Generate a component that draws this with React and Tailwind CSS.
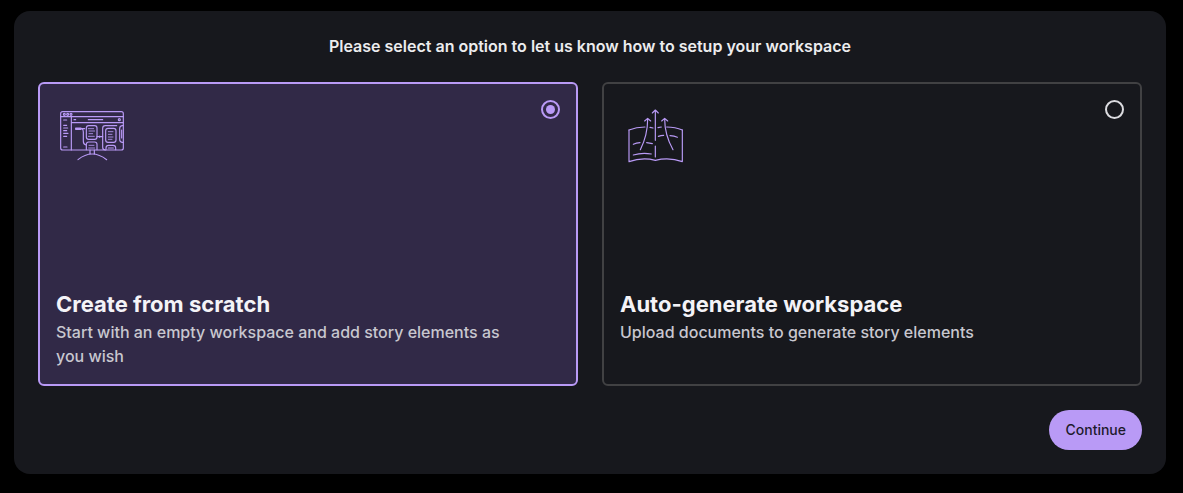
import React, { useState } from 'react';
import clsx from 'clsx';

const CanvasIcon = () => (
  <svg
    className="size-18"
    viewBox="12 -6 216 216"
    fill="none"
    stroke="#b99af6"
    strokeWidth="3.5"
    strokeLinecap="round"
    strokeLinejoin="round"
    aria-hidden="true"
  >
    {/* monitor */}
    <rect x="26" y="29" width="188" height="115" rx="6" />
    <path d="M26 44H214M58 44V144M58 62H214" />
    <circle cx="37" cy="37" r="3" />
    <circle cx="47" cy="37" r="3" />
    <circle cx="57" cy="37" r="3" />
    {/* side menu and toolbar */}
    <path d="M35 54H44M35 70H44M35 78H47M35 86H44M35 94H48M35 103H44M35 135H45M66 53H71M109 53H152" />
    <circle cx="202" cy="53" r="3" />
    {/* nodes */}
    <rect x="71" y="78" width="16" height="4" fill="#b99af6" />
    <path d="M87 80H98M90 80Q94 82 94 90V118Q94 128 102 129M135 104H152M143 102V106" />
    <rect x="103" y="71" width="32" height="41" rx="7" />
    <path d="M109 80H125M111 87H128M111 95H122M109 103H127" strokeWidth="2.5" />
    <path d="M103 143V127Q103 120 110 120H128Q135 120 135 127V143" />
    <path d="M111 130H126M110 138H128" strokeWidth="2.5" />
    <path d="M194 71H160Q152 71 152 79V136Q152 144 160 144" />
    <rect x="161" y="79" width="31" height="42" rx="7" />
    <path d="M169 89H183M169 97H180M169 105H183M169 112H180" strokeWidth="2.5" />
    <path d="M162 143V138Q162 130 170 130H183Q191 130 191 138V143M169 138H184" />
    <path d="M214 71H210Q203 72 203 80V112Q203 120 210 121H214M209 84V108" />
    {/* stand */}
    <path d="M114 144V157M127 144V157M78 173Q120 139 164 173" />
  </svg>
);

const BookIcon = () => (
  <svg
    className="size-18"
    viewBox="12 0 216 216"
    fill="none"
    stroke="#b99af6"
    strokeWidth="3.5"
    strokeLinecap="round"
    strokeLinejoin="round"
    aria-hidden="true"
  >
    {/* book */}
    <path d="M39 90V185Q79 171 118 181Q160 171 199 185V90" />
    <path d="M39 90Q61 81 87 81M102 82L111 84M126 83L136 81M152 81Q178 81 199 90" />
    <path d="M52 133Q61 129 72 128M92 128Q101 129 109 131M52 165Q78 157 106 162M127 109Q135 106 143 106M162 107Q175 108 184 112" />
    {/* arrows */}
    <path d="M118 171V138M118 121V31M109 39L118 30L127 39" />
    <path d="M73 149C88 119 95 95 95 57M86 63L95 55L104 63" />
    <path d="M171 149C154 119 146 95 146 57M137 63L146 55L155 63" />
  </svg>
);

const options = [
  {
    id: 'scratch',
    title: 'Create from scratch',
    description: 'Start with an empty workspace and add story elements as you wish',
    icon: CanvasIcon,
  },
  {
    id: 'auto',
    title: 'Auto-generate workspace',
    description: 'Upload documents to generate story elements',
    icon: BookIcon,
  },
];

const OptionCard = ({ option, selected, onSelect }) => {
  const Icon = option.icon;

  return (
    <label
      className={clsx(
        'flex min-h-76 flex-1 cursor-pointer flex-col justify-between rounded-md border-2 p-4',
        selected ? 'border-[#b99af6] bg-[#312947]' : 'border-[#414143]'
      )}
    >
      <div className="flex items-start justify-between">
        <Icon />
        <input
          type="radio"
          name="workspace-setup"
          value={option.id}
          checked={selected}
          onChange={() => onSelect(option.id)}
          className="size-[19px] cursor-pointer appearance-none rounded-full border-2 border-[#dcdce0] bg-clip-content p-[3px] checked:border-[#b99af6] checked:bg-[#b99af6]"
        />
      </div>
      <div>
        <h2 className="text-[22px] leading-8 font-bold text-[#f4f3f7]">{option.title}</h2>
        <p className="min-h-12 w-11/12 text-base font-medium text-[#c8c7cf]">
          {option.description}
        </p>
      </div>
    </label>
  );
};

const App = () => {
  const [selected, setSelected] = useState('scratch');

  return (
    <div className="min-h-screen bg-black pt-[11px] pr-[17px] pb-[19px] pl-[14px] font-['Inter',sans-serif]">
      <form
        className="rounded-2xl bg-[#17181d] p-6"
        onSubmit={(e) => e.preventDefault()}
      >
        <h1 className="text-center text-base leading-[23px] font-semibold text-[#ececee]">
          Please select an option to let us know how to setup your workspace
        </h1>
        <div className="mt-6 flex gap-6">
          {options.map((option) => (
            <OptionCard
              key={option.id}
              option={option}
              selected={selected === option.id}
              onSelect={setSelected}
            />
          ))}
        </div>
        <div className="mt-6 flex justify-end">
          <button
            type="submit"
            className="h-10 cursor-pointer rounded-full bg-[#b99af6] px-4 text-sm font-medium text-[#1d1a2b]"
          >
            Continue
          </button>
        </div>
      </form>
    </div>
  );
};

export default App;
